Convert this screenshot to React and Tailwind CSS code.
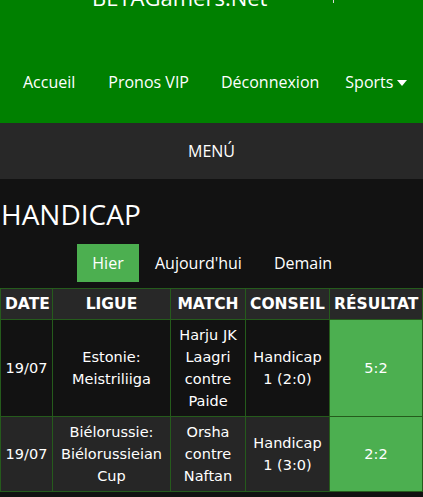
const navLinks = ["Accueil", "Pronos VIP", "Déconnexion"];

const rows = [
  {
    date: "19/07",
    league: "Estonie: Meistriliiga",
    match: "Harju JK Laagri contre Paide",
    tip: "Handicap 1 (2:0)",
    result: "5:2",
    bg: "bg-[#121212]",
  },
  {
    date: "19/07",
    league: "Biélorussie: Biélorussieian Cup",
    match: "Orsha contre Naftan",
    tip: "Handicap 1 (3:0)",
    result: "2:2",
    bg: "bg-[#262626]",
  },
];

const cell = "border border-[#255b1c] px-1 py-1 text-center align-middle";

export default function App() {
  return (
    <div className="min-h-[497px] bg-[#121212] text-white">
      <header className="relative h-[123px] overflow-hidden bg-[#008000] font-['Open_Sans',sans-serif]">
        <div className="-mt-[18px] pl-[92px] text-[22px] leading-[30px]">BETAGamers.Net</div>
        <span className="absolute left-[333px] top-0 h-[3px] w-px bg-[#d9d9d9]" />
        <nav className="mt-[59px] flex items-center text-[16px] leading-[22px]">
          {navLinks.map((l, i) => (
            <a
              key={l}
              className={
                i === 0 ? "ml-[23px]" : i === 1 ? "ml-[33px]" : "ml-[32px]"
              }
            >
              {l}
            </a>
          ))}
          <a className="ml-[26px] flex items-center">
            Sports
            <svg width="10" height="6" viewBox="0 0 10 6" className="ml-[4px] mt-[1px]">
              <path d="M0 0h10L5 6z" fill="#fff" />
            </svg>
          </a>
        </nav>
      </header>

      <div className="flex h-[56px] items-center justify-center bg-[#282828] font-['Open_Sans',sans-serif] text-[16px]">
        MENÚ
      </div>

      <h1 className="mt-[17px] pl-[1px] font-['Open_Sans',sans-serif] text-[28px] leading-[36px]">HANDICAP</h1>

      <div className="mt-[12px] flex pl-[77px] font-['Open_Sans',sans-serif] text-[16px]">
        <a className="flex h-[38px] w-[62px] items-center justify-center bg-[#4caf50]">Hier</a>
        <a className="flex h-[38px] items-center px-4">Aujourd'hui</a>
        <a className="flex h-[38px] items-center px-4">Demain</a>
      </div>

      <table className="mt-[6px] w-full table-fixed border-collapse font-['DejaVu_Sans',sans-serif] text-[14.5px] leading-[22px]">
        <colgroup>
          <col className="w-[52px]" />
          <col className="w-[118px]" />
          <col className="w-[75px]" />
          <col className="w-[84px]" />
          <col />
        </colgroup>
        <thead>
          <tr className="bg-[#282828] text-[15.5px] font-bold">
            <th className={`${cell} px-0`}>DATE</th>
            <th className={`${cell} px-0`}>LIGUE</th>
            <th className={`${cell} px-0`}>MATCH</th>
            <th className={`${cell} px-0`}>CONSEIL</th>
            <th className={`${cell} px-0`}>RÉSULTAT</th>
          </tr>
        </thead>
        <tbody>
          {rows.map((r, i) => (
            <tr key={i} className={r.bg}>
              <td className={cell}>{r.date}</td>
              <td className={cell}>{r.league}</td>
              <td className={cell}>{r.match}</td>
              <td className={cell}>{r.tip}</td>
              <td className={`${cell} bg-[#4caf50]`}>{r.result}</td>
            </tr>
          ))}
        </tbody>
      </table>
    </div>
  );
}
